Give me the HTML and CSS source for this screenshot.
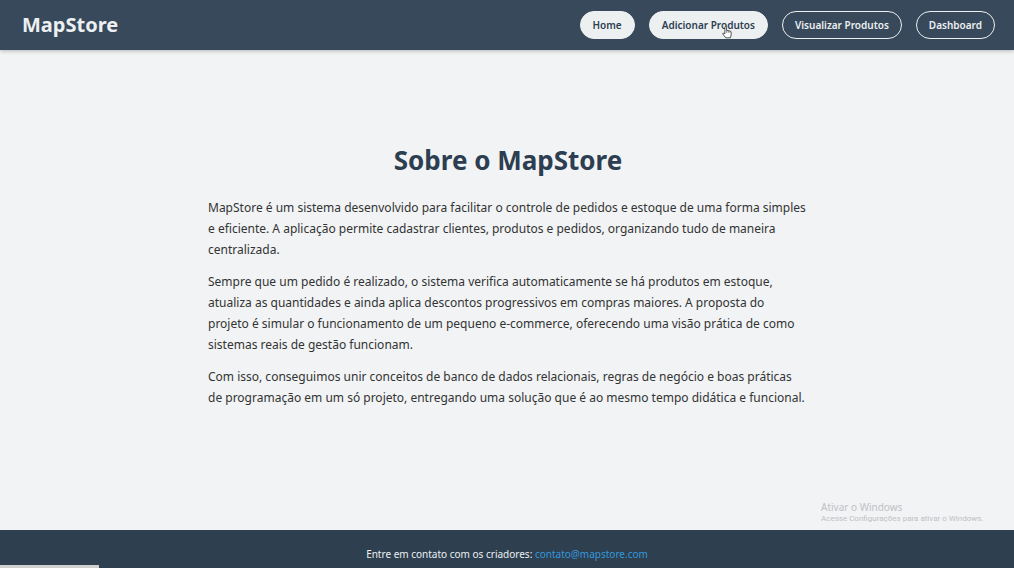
FILE: index.html
```html
<!DOCTYPE html>
<html lang="pt-BR">
<head>
<meta charset="utf-8">
<title>MapStore</title>
<link rel="stylesheet" href="styles.css">
</head>
<body>
<header class="topbar">
  <div class="brand">MapStore</div>
  <nav class="nav">
    <a class="nav-link active" href="#">Home</a>
    <a class="nav-link active" href="#">Adicionar Produtos</a>
    <a class="nav-link" href="#">Visualizar Produtos</a>
    <a class="nav-link" href="#">Dashboard</a>
  </nav>
</header>
<main class="main">
  <section class="about">
    <h1 class="title">Sobre o MapStore</h1>
    <p>MapStore é um sistema desenvolvido para facilitar o controle de pedidos e estoque de uma forma simples e eficiente. A aplicação permite cadastrar clientes, produtos e pedidos, organizando tudo de maneira centralizada.</p>
    <p>Sempre que um pedido é realizado, o sistema verifica automaticamente se há produtos em estoque, atualiza as quantidades e ainda aplica descontos progressivos em compras maiores. A proposta do projeto é simular o funcionamento de um pequeno e-commerce, oferecendo uma visão prática de como sistemas reais de gestão funcionam.</p>
    <p>Com isso, conseguimos unir conceitos de banco de dados relacionais, regras de negócio e boas práticas de programação em um só projeto, entregando uma solução que é ao mesmo tempo didática e funcional.</p>
  </section>
</main>
<footer class="footer">Entre em contato com os criadores: <a href="mailto:contato@mapstore.com">contato@mapstore.com</a></footer>
<aside class="watermark">
  <div class="watermark-title">Ativar o Windows</div>
  <div class="watermark-text">Acesse Configurações para ativar o Windows.</div>
</aside>
<div class="status"></div>
<svg class="pointer" viewBox="0 0 12 16" width="10" height="14" aria-hidden="true"><path d="M3.500 10V2.200a1 1 0 0 1 2 0V6l4 .8q1.500.3 1.500 1.700v3l-1 3.500H4.500L1 10.500q-.3-1.500 1-1z" fill="#fff" stroke="#333" stroke-width="1"/><path d="M5.500 6v3M7.500 6.500V9M9.500 7v2" stroke="#555" stroke-width=".8"/></svg>
</body>
</html>
```
FILE: styles.css
```css
* { box-sizing: border-box; }
body {
  margin: 0;
  min-height: 100vh;
  display: flex;
  flex-direction: column;
  background: #f1f3f5;
  color: #333;
  font-family: "Noto Sans", "Open Sans", sans-serif;
}
.topbar {
  display: flex;
  align-items: center;
  justify-content: space-between;
  padding: 11px 19px 11px 22px;
  background: #39495c;
  box-shadow: 0 1px 4px rgba(0, 0, 0, .25);
}
.brand { font-size: 20px; font-weight: 700; line-height: 28px; color: #ecf0f1; }
.nav { display: flex; gap: 14px; }
.nav-link {
  padding: 0 12px;
  border: 1px solid #ecf0f1;
  border-radius: 14px;
  color: #ecf0f1;
  font-size: 10px;
  font-weight: 600;
  line-height: 26px;
  text-decoration: none;
}
.nav-link.active { background: #ecf0f1; color: #2c3e50; }
.main { flex: 1; padding: 90px 24px 24px 26px; }
.about { max-width: 600px; margin: 0 auto; }
.title {
  margin: 0 0 17px;
  color: #2c3e50;
  font-size: 26px;
  font-weight: 700;
  line-height: 40px;
  text-align: center;
}
.about p { margin: 0 0 11px; font-size: 12px; line-height: 21px; }
.footer {
  padding: 14px 16px 4px;
  background: #2e3f50;
  color: #ecf0f1;
  font-size: 10px;
  line-height: 20px;
  text-align: center;
}
.footer a { color: #3498db; text-decoration: none; }
.watermark { position: absolute; left: 821px; top: 500px; color: #bfc1c4; }
.watermark-title { font-size: 10px; line-height: 14px; }
.watermark-text { font-family: Roboto, sans-serif; font-size: 8px; line-height: 10px; }
.status { position: absolute; left: 0; bottom: 0; width: 99px; height: 3px; background: #d0d0d0; }
.pointer { position: absolute; left: 722px; top: 25px; }
```
